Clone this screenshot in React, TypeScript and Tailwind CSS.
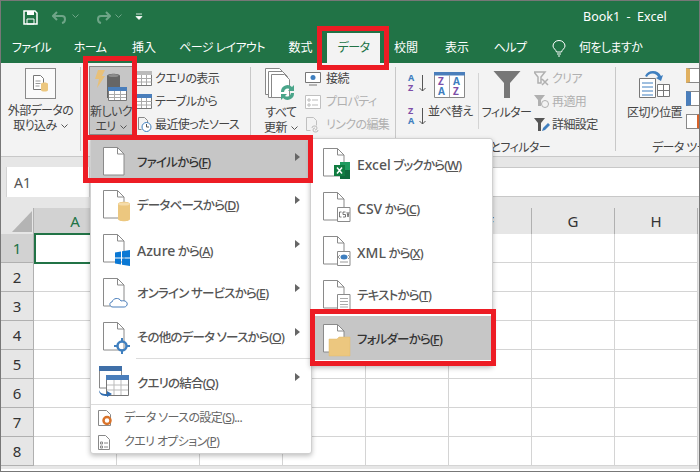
import React from "react";

const Chevron = ({ color = "#555" }: { color?: string }) => (
  <svg width="7" height="4" viewBox="0 0 7 4" className="inline-block ml-[4px] mb-[2px]">
    <path d="M.5.5l3 3 3-3" fill="none" stroke={color} />
  </svg>
);

const Arrow = () => (
  <svg width="5" height="8" viewBox="0 0 5 8" className="absolute right-[11px] top-[14px]">
    <path d="M0 0l5 4-5 4z" fill="#666" />
  </svg>
);

const MiniTable = ({ dim = false }: { dim?: boolean }) => (
  <svg width="16" height="15" viewBox="0 0 16 15">
    <path d="M.5.5h15v14H.5z" fill="#fff" stroke="#777" />
    <path d="M0 0h16v4H0z" fill={dim ? "#bbb" : "#4a7ebb"} />
    <path d="M.5 7.500h15M.5 11h15M5.500 4v10M10.500 4v10" stroke="#aaa" fill="none" />
  </svg>
);

// small A-Z sort icon, top letter first
const SortIcon = ({ top, bottom }: { top: string; bottom: string }) => (
  <svg width="22" height="22" viewBox="0 0 22 22" className="absolute left-[11px] overflow-visible">
    <text x="1" y="9" fontSize="9" fontWeight="700" fill={top === "A" ? "#3f7fbf" : "#7d4fa8"}>
      {top}
    </text>
    <text x="1" y="19" fontSize="9" fontWeight="700" fill={bottom === "A" ? "#3f7fbf" : "#7d4fa8"}>
      {bottom}
    </text>
    <path d="M15.500 3v16M12.500 16l3 3 3-3" fill="none" stroke="#555" />
  </svg>
);

// page outline shared by the menu icons, extras are drawn on top of it
const Doc = ({ children }: { children?: React.ReactNode }) => (
  <svg width="30" height="32" viewBox="0 0 30 32" className="shrink-0 overflow-visible mt-[4px]">
    <path d="M.5.5h14l6.500 6.500v21H.5z" fill="#fff" stroke="#8a8a8a" />
    <path d="M14.500.5v6.500H21" fill="none" stroke="#8a8a8a" />
    {children}
  </svg>
);

const Cylinder = () => (
  <g>
    <path d="M15 14c0-3 12-3 12 0v15c0 3-12 3-12 0z" fill="#ecc77f" />
    <ellipse cx="21" cy="14" rx="6" ry="1.600" fill="#f5dcaa" />
  </g>
);

const fileIcons: Record<string, React.ReactNode> = {
  db: <Cylinder />,
  azure: (
    <path
      d="M12 20.500l6-1v6h-6zM19 19.300l8-1.300v7.500h-8zM12 26.500h6v6l-6-1zM19 26.500h8v7.500l-8-1.300z"
      fill="#0a78d4"
      transform="translate(0 -2)"
    />
  ),
  cloud: (
    <path
      d="M10 32c-4 0-4-5-1-5 1-4 7-5 9-1 4-1 7 1 6 4-.5 1.500-2 2-3 2z"
      fill="#fff"
      stroke="#4a7ebb"
      transform="translate(0 -3)"
    />
  ),
  other: (
    <g stroke="#3f7fbf" fill="none">
      <circle cx="19" cy="24" r="4.500" strokeWidth="2.500" />
      <path d="M19 16v4M19 28v4M11 24h4M23 24h4" strokeWidth="2" />
    </g>
  ),
  excel: (
    <g>
      <path d="M17 14h10v17H17z" fill="#1f9a5f" />
      <path d="M17 22h10v9H17z" fill="#0e6b3c" />
      <path d="M11 17h11v11H11z" fill="#107c41" />
      <path d="M14 19.500l5 6M19 19.500l-5 6" stroke="#fff" strokeWidth="1.500" />
    </g>
  ),
  csv: (
    <g>
      <path d="M14.500 15.500h12.500v14H14.500z" fill="#fff" stroke="#8a8a8a" />
      <path d="M18.500 20h-2v5h2M22.500 20H20v2.500h2.500V25H20M24 20l1 5 1-5" fill="none" stroke="#555" strokeWidth=".8" />
    </g>
  ),
  xml: (
    <g>
      <path d="M14.500 15.500h12.500v14H14.500z" fill="#fff" stroke="#8a8a8a" />
      <ellipse cx="21" cy="21" rx="3.500" ry="2.500" fill="#3f7fbf" />
      <path d="M15 21l2-2M15 21l2 2M27 21l-2-2M27 21l-2 2M17 26h8" stroke="#999" fill="none" />
    </g>
  ),
  text: (
    <g>
      <path d="M14.500 14.500h12.500v15H14.500z" fill="#fff" stroke="#8a8a8a" />
      <path d="M17 18.500h8M17 21.500h8M17 24.500h8M17 27h8" stroke="#aaa" />
    </g>
  ),
  folder: <path d="M6 15h8l2-2h11v19H6z" fill="#ecc77f" stroke="#e2b96d" strokeWidth=".5" />,
};

const MenuRow = ({
  icon,
  latin,
  label,
  hot,
  active = false,
  arrow = false,
  h = "h-[44px]",
}: {
  icon?: string;
  latin?: string;
  label: string;
  hot: string;
  active?: boolean;
  arrow?: boolean;
  h?: string;
}) => (
  <div className={`relative flex items-center pl-[12px] ${h} ${active ? "bg-[#c6c6c6]" : ""}`}>
    <div className="w-[34px] shrink-0">
      <Doc>{icon ? fileIcons[icon] : null}</Doc>
    </div>
    <div className={`mt-[5px] whitespace-pre text-[12.5px] tracking-[-0.8px] font-medium ${active ? "text-[#333]" : "text-[#555]"}`}>
      {latin && <span className="text-[14px] tracking-normal">{latin}</span>}
      {label}(<span className="underline">{hot}</span>)
    </div>
    {arrow && <Arrow />}
  </div>
);

const columns = ["A", "B", "C", "D", "E", "F", "G", "H"];
const hiddenColumns = ["B", "C", "D", "E"]; // these sit under the dropdowns
const rows = [1, 2, 3, 4, 5, 6, 7, 8];

export default function App() {
  return (
    <div className="relative w-[700px] h-[472px] overflow-hidden border border-[#777] bg-white font-['Noto_Sans','Noto_Sans_CJK_JP',sans-serif] [font-feature-settings:'palt'] tracking-[-0.6px] text-[12px] text-[#444]">
      {/* title bar */}
      <div className="h-[62px] bg-[#217346] text-white flex flex-col">
        <div className="h-[32px] flex items-center relative">
          <svg width="15" height="15" viewBox="0 0 15 15" className="ml-[22px]">
            <path d="M1 1h11l2 2v11H1z" fill="none" stroke="#fff" strokeWidth="1.500" />
            <path d="M4 1h7v4H4z" fill="#fff" />
            <path d="M4 9h7v5H4z" fill="none" stroke="#fff" />
          </svg>
          <svg width="16" height="13" viewBox="0 0 16 13" className="ml-[14px]">
            <path d="M5 1L1 5l4 4M1 5h9c4 0 4 6 0 7" fill="none" stroke="#6fa588" strokeWidth="2" />
          </svg>
          <Chevron color="#6fa588" />
          <svg width="16" height="13" viewBox="0 0 16 13" className="ml-[16px]">
            <path d="M11 1l4 4-4 4M15 5H6c-4 0-4 6 0 7" fill="none" stroke="#6fa588" strokeWidth="2" />
          </svg>
          <Chevron color="#6fa588" />
          <svg width="8" height="8" viewBox="0 0 8 8" className="ml-[13px]">
            <path d="M1 1h6M1 3.500h6l-3 3z" fill="#fff" stroke="#fff" strokeWidth=".8" />
          </svg>
          <div className="absolute left-[582px] top-[7px] text-[12.5px] tracking-normal whitespace-pre">Book1  -  Excel</div>
        </div>
        <div className="flex h-[30px] text-center leading-[30px] whitespace-pre">
          <span className="w-[61px]">ファイル</span>
          <span className="w-[56px]">ホーム</span>
          <span className="w-[52px] tracking-normal">挿入</span>
          <span className="w-[104px]">ページ レイアウト</span>
          <span className="w-[53px] tracking-normal">数式</span>
          <span className="w-[53px] bg-[#f3f3f3] text-[#217346]">データ</span>
          <span className="w-[52px] tracking-normal">校閲</span>
          <span className="w-[50px] tracking-normal">表示</span>
          <span className="w-[56px]">ヘルプ</span>
          <span className="ml-[14px] flex items-center gap-[13px]">
            <svg width="14" height="17" viewBox="0 0 14 17">
              <path d="M4.500 12C4 9.500 1 8.500 1 6a6 5.500 0 0 1 12 0c0 2.500-3 3.500-3.500 6zM5 14h4M6 16h2" fill="none" stroke="#fff" />
            </svg>
            何をしますか
          </span>
        </div>
      </div>

      {/* ribbon */}
      <div className="h-[94px] bg-[#f3f3f3] border-b border-[#c8c8c8] flex leading-[15px]">
        <div className="w-[79px] pt-[5px] flex flex-col items-center">
          <div className="w-[31px] h-[31px] border border-[#8a8a8a] bg-[#fafafa] flex items-center justify-center">
            <svg width="15" height="17" viewBox="0 0 15 17">
              <path d="M.5.5h7l3 3v11H.5z" fill="#fff" stroke="#777" />
              <path d="M2.500 6h5M2.500 8.500h5M2.500 11h4" stroke="#999" />
              <path d="M8 9c0-2 7-2 7 0v6c0 2-7 2-7 0z" fill="#ecc77f" />
            </svg>
          </div>
          <div className="mt-[4px] text-center">
            外部データの
            <br />
            取り込み
            <Chevron />
          </div>
        </div>
        <div className="w-px h-[84px] mt-[4px] bg-[#c8c8c8]" />

        <div className="w-[169px] flex pt-[3px]">
          <div className="ml-[8px] w-[44px] h-[69px] bg-[#c6c6c6] border border-[#8a8a8a] flex flex-col items-center text-center shrink-0">
            <svg width="34" height="34" viewBox="0 0 34 34" className="mt-[1px]">
              <path d="M4 2h7L8 8h3L3 20l2-9H1z" fill="#e8c078" />
              <path d="M13 8c0-3 13-3 13 0v22H13z" fill="#666" />
              <ellipse cx="19.500" cy="7.500" rx="5" ry="1.500" fill="#8c8c8c" />
              <path d="M14.500 19.500h18v13h-18z" fill="#fff" stroke="#777" />
              <path d="M14 19h19v4H14z" fill="#4a7ebb" />
              <path d="M15 26.500h17M15 29.500h17M20.500 23v9M26.500 23v9" stroke="#aaa" />
            </svg>
            <div className="mt-[2px] leading-[15px] whitespace-nowrap">
              新しいク
              <br />
              エリ
              <Chevron />
            </div>
          </div>
          <div className="ml-[3px] flex flex-col mt-[1px]">
            <div className="h-[23px] flex items-center gap-[3px]">
              <MiniTable dim />
              クエリの表示
            </div>
            <div className="h-[23px] flex items-center gap-[3px]">
              <MiniTable />
              テーブルから
            </div>
            <div className="h-[23px] flex items-center gap-[3px] whitespace-nowrap">
              <svg width="16" height="15" viewBox="0 0 16 15">
                <path d="M2.500.5h6l3 3v3M2.500.5v12h3" fill="none" stroke="#888" />
                <circle cx="10.500" cy="10" r="4.500" fill="#fff" stroke="#3f7fbf" />
                <path d="M10.500 7v3h2.500" fill="none" stroke="#555" />
              </svg>
              最近使ったソース
            </div>
          </div>
        </div>
        <div className="w-px h-[84px] mt-[4px] bg-[#c8c8c8]" />

        <div className="w-[144px] flex pt-[5px]">
          <div className="ml-[11px] w-[38px] flex flex-col items-center text-center">
            <svg width="32" height="32" viewBox="0 0 32 32">
              <path d="M.5.5h14l5 5v21H.5z" fill="#fff" stroke="#888" />
              <path d="M3.500 3.500h14l5 5v21h-19z" fill="#fff" stroke="#888" />
              <path d="M6.500 6.500h13l5 5v18h-18z" fill="#fff" stroke="#888" />
              <path d="M16 24a6.500 6.500 0 0 1 11-5l2-2v6h-6l2-2a4 4 0 0 0-6 3zM29 25a6.500 6.500 0 0 1-11 5l-2 2v-6h6l-2 2a4 4 0 0 0 6-3z" fill="#4aa58a" />
            </svg>
            <div className="mt-[5px] leading-[15px] whitespace-nowrap">
              すべて
              <br />
              更新
              <Chevron />
            </div>
          </div>
          <div className="ml-[5px] flex flex-col -mt-[1px]">
            <div className="h-[23px] flex items-center gap-[5px]">
              <svg width="16" height="14" viewBox="0 0 16 14">
                <path d="M.5.5h15v10H.5z" fill="#fff" stroke="#777" />
                <circle cx="8" cy="5.500" r="2.500" fill="#3f7fbf" />
                <path d="M4 13h8" stroke="#777" />
              </svg>
              接続
            </div>
            <div className="h-[23px] flex items-center gap-[5px] text-[#b0b0b0]">
              <svg width="16" height="14" viewBox="0 0 16 14">
                <path d="M.5.5h15v13H.5z" fill="#fff" stroke="#c0c0c0" />
                <path d="M3 4h2v2H3zM3 9h2v2H3zM7 5h6M7 10h6" fill="none" stroke="#bbb" />
              </svg>
              プロパティ
            </div>
            <div className="h-[23px] flex items-center gap-[5px] text-[#b0b0b0]">
              <svg width="16" height="16" viewBox="0 0 16 16">
                <path d="M1.500.5h7l3 3v5M1.500.5v13h4" fill="none" stroke="#c0c0c0" />
                <path d="M7 11a2 2 0 0 1 2-2h1a2 2 0 0 1 0 4M13 13a2 2 0 0 1-2 2h-1a2 2 0 0 1 0-4" fill="none" stroke="#bbb" />
              </svg>
              リンクの編集
            </div>
          </div>
        </div>
        <div className="w-px h-[84px] mt-[4px] bg-[#c8c8c8]" />

        <div className="w-[219px] flex flex-col">
          <div className="flex h-[76px]">
            <div className="w-[82px] relative">
              <div className="absolute left-0 top-[9px] w-full">
                <SortIcon top="A" bottom="Z" />
              </div>
              <div className="absolute left-0 top-[42px] w-full">
                <SortIcon top="Z" bottom="A" />
              </div>
              <svg width="31" height="26" viewBox="0 0 31 26" className="absolute left-[38px] top-[9px]">
                <path d="M.5.5h30v25H.5z" fill="#fff" stroke="#888" />
                <path d="M0 0h31v3.500H0z" fill="#4a7ebb" />
                <path d="M15.500 3v22" stroke="#aaa" />
                <text x="4" y="13" fontSize="10" fontWeight="700" fill="#7d4fa8">Z</text>
                <text x="4" y="23" fontSize="10" fontWeight="700" fill="#3f7fbf">A</text>
                <text x="19" y="13" fontSize="10" fontWeight="700" fill="#3f7fbf">A</text>
                <text x="19" y="23" fontSize="10" fontWeight="700" fill="#7d4fa8">Z</text>
              </svg>
              <div className="absolute left-[32px] top-[41px] whitespace-nowrap">並べ替え</div>
            </div>
            <div className="w-px h-[56px] mt-[10px] bg-[#d4d4d4]" />
            <div className="w-[55px] pt-[7px] flex flex-col items-center">
              <svg width="28" height="28" viewBox="0 0 28 28">
                <path d="M.5 1h27L17 13v15h-6V13z" fill="#777" />
              </svg>
              <div className="mt-[7px] whitespace-nowrap">フィルター</div>
            </div>
            <div className="flex flex-col pt-[4px] text-[#b0b0b0]">
              <div className="h-[23px] flex items-center gap-[2px]">
                <svg width="16" height="15" viewBox="0 0 16 15">
                  <path d="M0 1h11L7 6v6H4V6zM8 8l6 6M14 8l-6 6" fill="none" stroke="#b0b0b0" strokeWidth="1.500" />
                </svg>
                クリア
              </div>
              <div className="h-[23px] flex items-center gap-[2px]">
                <svg width="16" height="15" viewBox="0 0 16 15">
                  <path d="M0 1h11L7 6v6H4V6z" fill="#b0b0b0" />
                  <circle cx="11" cy="10" r="3.500" fill="none" stroke="#b0b0b0" />
                </svg>
                再適用
              </div>
              <div className="h-[23px] flex items-center gap-[2px] text-[#444]">
                <svg width="16" height="15" viewBox="0 0 16 15">
                  <path d="M0 1h11L7 6v8H4V6z" fill="#555" />
                  <path d="M8 14l1-3 5-5 2 2-5 5z" fill="#3f7fbf" />
                </svg>
                詳細設定
              </div>
            </div>
          </div>
          <div className="text-right pr-[65px] mt-[1px]">並べ替えとフィルター</div>
        </div>
        <div className="w-px h-[84px] mt-[4px] bg-[#c8c8c8]" />

        <div className="flex-1 flex flex-col relative overflow-hidden">
          <div className="flex h-[76px]">
            <div className="ml-[11px] w-[56px] pt-[7px] flex flex-col items-center">
              <svg width="31" height="28" viewBox="0 0 31 28">
                <path d="M.5 8.500h16v19H.5z" fill="#fff" stroke="#777" />
                <path d="M3 13h11M3 17h11M3 21h11M3 25h11" stroke="#3f7fbf" />
                <path d="M18.500 14.500h12v12h-12z" fill="#fff" stroke="#777" />
                <path d="M19 20.500h11M24.500 15v11" stroke="#777" />
                <path d="M6 6a9 9 0 0 1 16 0l2-1-2 6-5-3 2-1a6 6 0 0 0-11 0z" fill="#3f7fbf" />
              </svg>
              <div className="mt-[7px] whitespace-nowrap">区切り位置</div>
            </div>
            <div className="ml-[4px] flex flex-col pt-[5px] gap-[8px]">
              <div className="w-[16px] h-[15px] border border-[#888] border-l-[4px] border-l-[#e0b060] bg-white" />
              <div className="w-[16px] h-[15px] border border-[#888] border-l-[5px] border-l-[#4a7ebb] bg-white" />
              <div className="w-[16px] h-[15px] border border-[#888] border-r-[5px] border-r-[#d9632a] bg-white" />
            </div>
          </div>
          <div className="mt-[1px] pl-[36px] whitespace-pre">データ ツール</div>
        </div>
      </div>

      {/* formula bar */}
      <div className="h-[40px] bg-[#e6e6e6] pt-[10px] flex">
        <div className="w-[84px] ml-[5px] h-[30px] bg-white border-x border-[#d4d4d4] flex items-center pl-[7px] text-[14px] tracking-normal text-[#555]">
          A1
        </div>
        <div className="flex-1 ml-[6px] h-[30px] bg-white border-y border-[#c8c8c8]" />
      </div>

      {/* sheet */}
      <div className="bg-[#e6e6e6] pt-[11px]">
        <div className="grid grid-cols-[33px_repeat(8,83px)] auto-rows-[29px]">
          <div className="relative h-[26px] border-r border-[#b0b0b0]">
            <svg width="20" height="21" viewBox="0 0 20 21" className="absolute left-[11px] top-[3px]">
              <path d="M20 0v21H0z" fill="#b4b4b4" />
            </svg>
          </div>
          {columns.map((c) => (
            <div
              key={c}
              className={`h-[26px] flex items-center justify-center text-[15px] tracking-normal border-r border-[#b0b0b0] ${c === "A" ? "bg-[#d2d2d2] text-[#217346]" : "text-[#333]"}`}
            >
              {hiddenColumns.includes(c) ? null : c}
            </div>
          ))}
          {rows.map((r) => (
            <React.Fragment key={r}>
              <div
                className={`-mt-[3px] h-[29px] flex items-center justify-center text-[15px] tracking-normal border-b border-r border-[#b0b0b0] ${r === 1 ? "bg-[#d2d2d2] text-[#217346]" : "bg-[#e6e6e6] text-[#333]"}`}
              >
                {r}
              </div>
              {columns.map((c) => (
                <div key={c} className="-mt-[3px] h-[29px] bg-white border-b border-r border-[#d4d4d4]" />
              ))}
            </React.Fragment>
          ))}
        </div>
      </div>

      {/* selected cell */}
      <div className="absolute left-[33px] top-[232px] w-[85px] h-[31px] border-2 border-[#217346]" />

      {/* first dropdown */}
      <div className="absolute left-[89px] top-[137px] w-[222px] h-[316px] bg-white rounded-[3px] border border-[#d0d0d0] shadow-[0_2px_5px_rgba(0,0,0,0.25)]">
        <MenuRow label="ファイルから" hot="F" active arrow h="h-[43px]" />
        <MenuRow icon="db" label="データベースから" hot="D" arrow />
        <MenuRow icon="azure" latin="Azure" label=" から" hot="A" arrow />
        <MenuRow icon="cloud" label="オンライン サービスから" hot="E" arrow />
        <MenuRow icon="other" label="その他のデータ ソースから" hot="O" arrow />
        <div className="ml-[45px] h-px bg-[#dcdcdc]" />
        <div className="relative flex items-center pl-[8px] h-[45px]">
          <div className="w-[38px] shrink-0">
            <svg width="30" height="31" viewBox="0 0 30 31">
              <path d="M.5 1h22v21H.5z" fill="#fff" stroke="#888" />
              <path d="M0 0h23v5H0z" fill="#3f6fa8" />
              <path d="M7.500 9.500h22v20h-22z" fill="#fff" stroke="#777" />
              <path d="M7 9h23v5H7z" fill="#4a7ebb" />
              <path d="M8 19h21M8 24h21M15 14v15M22 14v15" stroke="#bbb" />
              <path d="M0 24c1 4 5 4 8 4V25l5 3-5 3v-1c-4 0-8-1-8-6z" fill="#2f6cb0" />
            </svg>
          </div>
          <div className="mt-[5px] text-[12.5px] tracking-[-0.8px] font-medium text-[#555]">
            クエリの結合(<span className="underline">Q</span>)
          </div>
          <Arrow />
        </div>
        <div className="h-px bg-[#dcdcdc]" />
        <div className="flex items-center h-[25px] pl-[7px] text-[#666]">
          <div className="w-[26px] shrink-0">
            <svg width="14" height="16" viewBox="0 0 14 16">
              <path d="M.5.5h8l4 4v11H.5z" fill="#fff" stroke="#888" />
              <circle cx="9" cy="10.500" r="3.500" fill="none" stroke="#d9732a" strokeWidth="2.500" />
            </svg>
          </div>
          データ ソースの設定(<span className="underline">S</span>)...
        </div>
        <div className="flex items-center h-[24px] pl-[7px] text-[#666]">
          <div className="w-[26px] shrink-0">
            <svg width="12" height="15" viewBox="0 0 12 15">
              <path d="M.5.5h7l4 4v10H.5z" fill="#fff" stroke="#888" />
              <path d="M2.500 7h2v2h-2zM2.500 11h2v2h-2zM6 8h4M6 12h4" fill="none" stroke="#888" />
            </svg>
          </div>
          クエリ オプション(<span className="underline">P</span>)
        </div>
      </div>

      {/* second dropdown */}
      <div className="absolute left-[309px] top-[137px] w-[183px] h-[228px] bg-white rounded-[3px] border border-[#d0d0d0] shadow-[0_2px_5px_rgba(0,0,0,0.25)] pt-[1px]">
        <MenuRow icon="excel" latin="Excel" label=" ブックから" hot="W" />
        <MenuRow icon="csv" latin="CSV" label=" から" hot="C" />
        <MenuRow icon="xml" latin="XML" label=" から" hot="X" />
        <MenuRow icon="text" label="テキストから" hot="T" />
        <MenuRow icon="folder" label="フォルダーから" hot="F" active />
      </div>

      {/* red callouts */}
      <div className="absolute left-[316px] top-[25px] w-[72px] h-[44px] border-[5px] border-[#ed1c24]" />
      <div className="absolute left-[82px] top-[55px] w-[54px] h-[84px] border-[5px] border-[#ed1c24]" />
      <div className="absolute left-[82px] top-[134px] w-[230px] h-[48px] border-[5px] border-[#ed1c24]" />
      <div className="absolute left-[309px] top-[308px] w-[186px] h-[57px] border-[5px] border-[#ed1c24]" />
    </div>
  );
}
